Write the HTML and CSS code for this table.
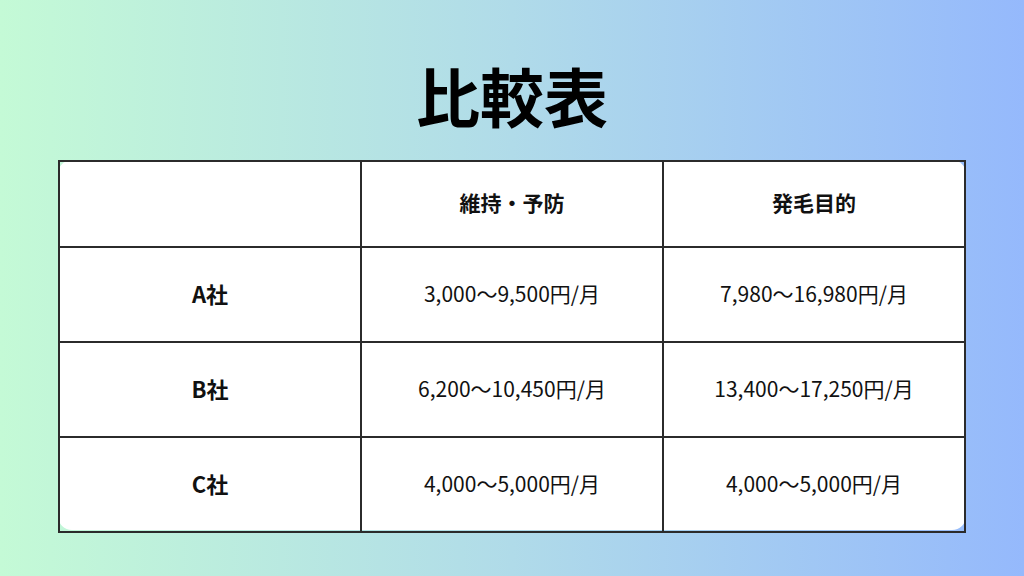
FILE: index.html
```html
<!DOCTYPE html>
<html lang="ja">
<head>
<meta charset="utf-8">
<link rel="stylesheet" href="styles.css">
</head>
<body>
<div class="page">
  <header class="title-area">
    <h1 class="title">比較表</h1>
  </header>
  <div class="card">
    <table class="compare">
      <thead>
        <tr class="head-row">
          <th></th>
          <th>維持・予防</th>
          <th>発毛目的</th>
        </tr>
      </thead>
      <tbody>
        <tr>
          <th>A社</th>
          <td>3,000〜9,500円/月</td>
          <td>7,980〜16,980円/月</td>
        </tr>
        <tr>
          <th>B社</th>
          <td>6,200〜10,450円/月</td>
          <td>13,400〜17,250円/月</td>
        </tr>
        <tr>
          <th>C社</th>
          <td>4,000〜5,000円/月</td>
          <td>4,000〜5,000円/月</td>
        </tr>
      </tbody>
    </table>
  </div>
</div>
</body>
</html>
```

FILE: styles.css
```css
* { box-sizing: border-box; }
html, body {
  margin: 0;
  padding: 0;
}
body {
  width: 1024px;
  height: 576px;
  overflow: hidden;
  font-family: "Noto Sans CJK JP", "Noto Sans", sans-serif;
  color: #111;
}
.page {
  width: 1024px;
  height: 576px;
  background: linear-gradient(90deg, #c4fad6 0%, #b0dbe9 50%, #95b9fc 100%);
  display: flex;
  flex-direction: column;
}
.title-area {
  height: 160px;
  padding-top: 28px;
  display: flex;
  align-items: center;
  justify-content: center;
}
.title {
  margin: 0;
  font-size: 64px;
  font-weight: 700;
  line-height: 1;
  color: #000;
}
.card {
  margin-left: 58px;
  width: 908px;
  height: 370px;
  background: #fff;
  border-radius: 14px;
}
.compare {
  width: 908px;
  height: 370px;
  border-collapse: collapse;
  table-layout: fixed;
}
.compare th,
.compare td {
  border: 2px solid #2b2b2b;
  text-align: center;
  vertical-align: middle;
  padding: 0 0 4px 0;
}
.compare th {
  font-weight: 700;
  font-size: 22px;
}
.compare td {
  font-weight: 400;
  font-size: 21px;
}
.compare thead th {
  font-size: 21px;
}
.head-row { height: 86px; }
.compare tbody tr { height: 95px; }
```
